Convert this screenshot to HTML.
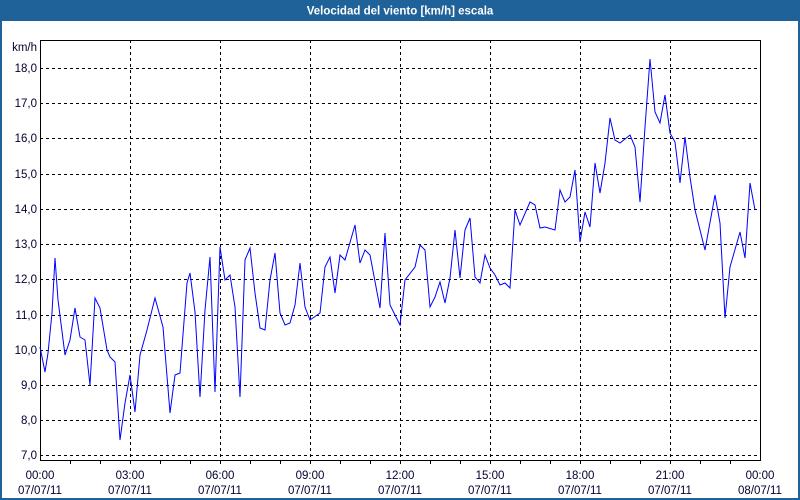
<!DOCTYPE html>
<html><head><meta charset="utf-8"><style>
body{margin:0;width:800px;height:500px;overflow:hidden;background:#fff;font-family:"Liberation Sans",sans-serif;}
</style></head><body>
<svg width="800" height="500" xmlns="http://www.w3.org/2000/svg" style="position:absolute;left:0;top:0">
<rect x="0" y="0" width="800" height="500" fill="#fff"/>
<rect x="0" y="0" width="800" height="21" fill="#1f6199"/>
<rect x="0" y="0" width="2" height="500" fill="#1f6199"/>
<rect x="798" y="0" width="2" height="500" fill="#1f6199"/>
<rect x="0" y="498" width="800" height="2" fill="#1f6199"/>
<text x="400" y="14.5" fill="#fff" font-size="11.5" font-weight="bold" text-anchor="middle">Velocidad del viento [km/h] escala</text>
<g stroke="#000" stroke-width="1" stroke-dasharray="3,3" fill="none">
<path d="M40 68.5H760M40 103.5H760M40 138.5H760M40 174.5H760M40 209.5H760M40 244.5H760M40 279.5H760M40 315.5H760M40 350.5H760M40 385.5H760M40 420.5H760M40 455.5H760"/>
<path d="M130.5 40V460M220.5 40V460M310.5 40V460M400.5 40V460M490.5 40V460M580.5 40V460M670.5 40V460"/>
</g>
<g stroke="#000" stroke-width="1" fill="none">
<path d="M40.5 40V461M40 40.5H760.5V461M40 460.5H761"/>
<path d="M70.5 460v4M100.5 460v4M130.5 460v4M160.5 460v4M190.5 460v4M220.5 460v4M250.5 460v4M280.5 460v4M310.5 460v4M340.5 460v4M370.5 460v4M400.5 460v4M430.5 460v4M460.5 460v4M490.5 460v4M520.5 460v4M550.5 460v4M580.5 460v4M610.5 460v4M640.5 460v4M670.5 460v4M700.5 460v4M730.5 460v4"/>
</g>
<polyline fill="none" stroke="#0000ff" stroke-width="1" points="40,347 45,372 48,353 52,313 55,258 58,300 65,355 70,340 75,308 80,337 85,340 90,385 95,298 100,308 107,350 110,357 115,362 120,440 125,403 130,375 135,412 140,355 147,330 155,298 163,327 170,413 175,375 180,373 187,283 190,273 195,312 200,397 205,310 210,257 215,392 220,247 225,280 230,275 235,307 240,397 245,260 250,248 255,293 260,328 265,330 270,280 275,253 280,313 285,325 290,323 295,305 300,263 305,307 310,320 320,313 325,267 330,257 335,293 340,255 345,260 355,225 360,263 365,250 370,255 380,308 385,233 390,305 400,325 405,280 415,267 420,245 425,250 430,307 435,297 440,282 445,303 450,278 455,230 460,278 465,230 470,218 475,277 480,283 485,255 490,268 495,275 500,285 505,283 510,288 515,210 520,225 530,202 535,205 540,228 545,227 555,230 560,190 565,202 570,197 575,170 580,242 585,212 590,227 595,163 600,193 605,163 610,118 615,140 620,143 630,135 635,147 640,202 645,127 650,59 655,112 660,123 665,95 670,133 675,142 680,183 685,137 690,177 695,210 705,250 715,195 720,223 725,318 730,267 740,232 745,258 750,183 755,210"/>
<g font-size="11.5" fill="#000030" text-anchor="end">
<text x="37" y="51">km/h</text>
<text x="37" y="72">18,0</text><text x="37" y="107">17,0</text><text x="37" y="142">16,0</text><text x="37" y="178">15,0</text><text x="37" y="213">14,0</text><text x="37" y="248">13,0</text><text x="37" y="283">12,0</text><text x="37" y="319">11,0</text><text x="37" y="354">10,0</text><text x="37" y="389">9,0</text><text x="37" y="424">8,0</text><text x="37" y="459">7,0</text>
</g>
<g font-size="11.5" fill="#000030" text-anchor="middle">
<text x="40" y="479">00:00</text><text x="40" y="494">07/07/11</text>
<text x="130" y="479">03:00</text><text x="130" y="494">07/07/11</text>
<text x="220" y="479">06:00</text><text x="220" y="494">07/07/11</text>
<text x="310" y="479">09:00</text><text x="310" y="494">07/07/11</text>
<text x="400" y="479">12:00</text><text x="400" y="494">07/07/11</text>
<text x="490" y="479">15:00</text><text x="490" y="494">07/07/11</text>
<text x="580" y="479">18:00</text><text x="580" y="494">07/07/11</text>
<text x="670" y="479">21:00</text><text x="670" y="494">07/07/11</text>
<text x="760" y="479">00:00</text><text x="760" y="494">08/07/11</text>
</g>
</svg>
</body></html>
